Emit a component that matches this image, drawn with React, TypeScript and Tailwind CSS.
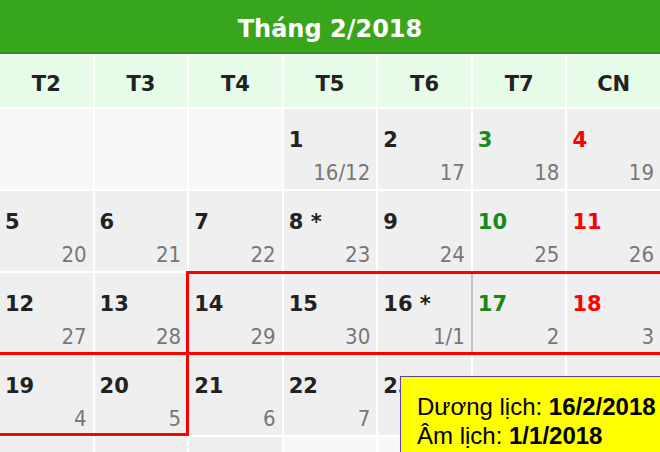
import clsx from "clsx";

type Day = { d: number; l: string; star?: boolean } | null;

const weeks: Day[][] = [
  [null, null, null, { d: 1, l: "16/12" }, { d: 2, l: "17" }, { d: 3, l: "18" }, { d: 4, l: "19" }],
  [{ d: 5, l: "20" }, { d: 6, l: "21" }, { d: 7, l: "22" }, { d: 8, l: "23", star: true }, { d: 9, l: "24" }, { d: 10, l: "25" }, { d: 11, l: "26" }],
  [{ d: 12, l: "27" }, { d: 13, l: "28" }, { d: 14, l: "29" }, { d: 15, l: "30" }, { d: 16, l: "1/1", star: true }, { d: 17, l: "2" }, { d: 18, l: "3" }],
  [{ d: 19, l: "4" }, { d: 20, l: "5" }, { d: 21, l: "6" }, { d: 22, l: "7" }, { d: 23, l: "8" }, { d: 24, l: "9" }, { d: 25, l: "10" }],
  [{ d: 26, l: "11" }, { d: 27, l: "12" }, { d: 28, l: "13" }, null, null, null, null],
];

const dayNames = ["T2", "T3", "T4", "T5", "T6", "T7", "CN"];

const boldFont = { fontFamily: '"DejaVu Sans", sans-serif' };

const DayCell = ({ day, col }: { day: Day; col: number }) => {
  if (!day) return <div className="h-[80px] bg-[#f8f8f8]" />;
  return (
    <div
      className={clsx(
        "relative flex h-[80px] flex-col justify-between bg-[#efefef] pb-[4px] pl-[5px] pr-[6px] pt-[19px]",
        day.d === 16 && "shadow-[2px_0_0_0_#c4c4c4]"
      )}
    >
      <span
        style={boldFont}
        className={clsx(
          "text-[21px] font-bold leading-[24px]",
          col === 5 ? "text-[#168a16]" : col === 6 ? "text-[#ff0000]" : "text-[#222]"
        )}
      >
        {day.d}
        {day.star && " *"}
      </span>
      <span className="self-end text-[22px] leading-[24px] text-[#777]">{day.l}</span>
    </div>
  );
};

export default function App() {
  return (
    <div
      className="relative flex h-[452px] w-[660px] flex-col gap-[2px] overflow-hidden bg-white"
      style={{ fontFamily: '"DejaVu Sans Condensed", "DejaVu Sans", sans-serif' }}
    >
      <div
        style={boldFont}
        className="flex h-[54px] shrink-0 items-center justify-center border-b-2 border-[#2f9418] bg-[#38a61d] pt-[6px] text-[24px] font-bold text-white"
      >
        Tháng 2/2018
      </div>
      <div className="grid h-[51px] shrink-0 grid-cols-7 gap-[2px]">
        {dayNames.map((n) => (
          <div
            key={n}
            style={boldFont}
            className="flex items-center justify-center bg-[#e6fce9] pt-[6px] text-[21px] font-bold text-[#222]"
          >
            {n}
          </div>
        ))}
      </div>
      {weeks.map((week, wi) => (
        <div key={wi} className="relative grid shrink-0 grid-cols-7 gap-[2px]">
          {week.map((day, ci) => (
            <DayCell key={ci} day={day} col={ci} />
          ))}
          {wi === 2 && (
            <div className="pointer-events-none absolute bottom-[-2px] left-[186px] right-[-4px] top-[-2px] border-[3px] border-[#ff0000]" />
          )}
          {wi === 3 && (
            <div className="pointer-events-none absolute bottom-[-1px] left-[-4px] top-[-3px] w-[193px] border-[3px] border-[#ff0000]" />
          )}
        </div>
      ))}
      <div
        className="absolute left-[400px] top-[376px] h-[120px] w-[300px] border border-[#5a3fa8] bg-[#ffff00] pl-[16px] pt-[15px] text-[24px] leading-[29px] text-black"
        style={{ fontFamily: '"Liberation Sans", Arial, sans-serif' }}
      >
        <div>
          Dương lịch: <b>16/2/2018</b>
        </div>
        <div>
          Âm lịch: <b>1/1/2018</b>
        </div>
      </div>
    </div>
  );
}
